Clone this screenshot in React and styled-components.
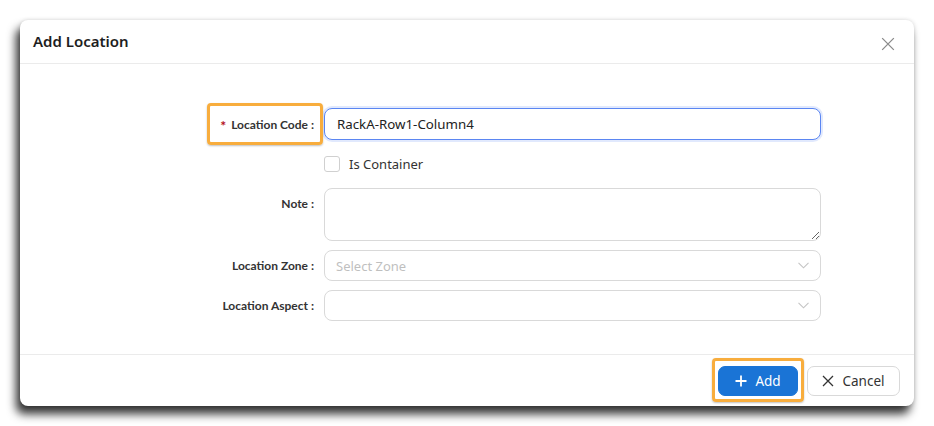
import React from 'react'
import styled, { createGlobalStyle } from 'styled-components'

const Global = createGlobalStyle`
  html, body {
    margin: 0;
    padding: 0;
    background: #ffffff;
    font-family: "Noto Sans", "Open Sans", sans-serif;
  }
`

const Page = styled.div`
  width: 934px;
  height: 426px;
  padding: 20px;
  box-sizing: border-box;
`

const Dialog = styled.div`
  width: 894px;
  height: 386px;
  background: #fff;
  border-radius: 8px;
  box-shadow: -4px 8px 10px rgba(0, 0, 0, 0.8), 0 0 4px rgba(0, 0, 0, 0.15);
  display: flex;
  flex-direction: column;
`

const Header = styled.div`
  height: 43px;
  border-bottom: 1px solid #ebebeb;
  display: flex;
  align-items: center;
  justify-content: space-between;
  padding: 0 18px 0 13px;
`

const Title = styled.h2`
  margin: -2px 0 0;
  font-size: 15px;
  font-weight: 600;
  color: #1e1e1e;
`

const Close = styled.button`
  border: none;
  background: none;
  padding: 0;
  margin-top: 4px;
  width: 16px;
  height: 16px;
  display: flex;
  align-items: center;
  justify-content: center;
`

const Body = styled.div`
  flex: 1;
  padding-top: 44px;
  display: grid;
  grid-template-columns: 294px 497px;
  column-gap: 10px;
  align-content: start;
`

const Label = styled.div`
  display: flex;
  align-items: center;
  justify-content: flex-end;
  height: ${p => p.$h || 32}px;
  align-self: start;
  box-sizing: border-box;
  font-family: Lato, sans-serif;
  font-weight: 700;
  font-size: 12px;
  color: #333;
  margin-top: ${p => p.$mt || 0}px;
`

const Marked = styled.span`
  position: relative;
  display: inline-flex;
  align-items: center;
  gap: 5px;

  &::after {
    content: '';
    position: absolute;
    left: -13px;
    right: -9px;
    top: -11px;
    bottom: -11px;
    border: 3px solid #f8ad3d;
    border-radius: 4px;
    box-shadow: 0 1px 2px rgba(0, 0, 0, 0.25);
  }
`

const Star = styled.span`
  color: #b3101d;
  font-size: 14px;
  margin-top: 3px;
`

const Field = styled.div`
  margin-top: ${p => p.$mt || 0}px;
`

const TextInput = styled.input`
  width: 100%;
  height: 32px;
  box-sizing: border-box;
  border-radius: 8px;
  border: 1px solid ${p => (p.$focus ? '#5b86f2' : '#d9d9d9')};
  box-shadow: ${p => (p.$focus ? '0 0 0 2px rgba(91, 134, 242, 0.18)' : 'none')};
  padding: 0 12px;
  font-family: "Noto Sans", sans-serif;
  font-size: 13.3px;
  color: #222;
  outline: none;
`

const Area = styled.textarea`
  display: block;
  width: 100%;
  height: 53px;
  box-sizing: border-box;
  border-radius: 8px;
  border: 1px solid #d9d9d9;
  outline: none;
  resize: vertical;
  font-family: "Noto Sans", sans-serif;
`

const CheckRow = styled.label`
  display: flex;
  align-items: center;
  gap: 9px;
  height: 48px;
  font-size: 13px;
  color: #333;
`

const Box = styled.span`
  width: 14px;
  height: 14px;
  border: 1px solid #d0d0d0;
  border-radius: 3px;
`

const Select = styled.div`
  height: 31px;
  box-sizing: border-box;
  border-radius: 8px;
  border: 1px solid #d9d9d9;
  display: flex;
  align-items: center;
  justify-content: space-between;
  padding: 0 11px 0 11px;
  font-size: 13px;
  color: #bfbfbf;
`

const Footer = styled.div`
  height: 51px;
  border-top: 1px solid #ebebeb;
  display: flex;
  align-items: center;
  justify-content: flex-end;
  gap: 9px;
  padding: 0 14px 0 0;
`

const Btn = styled.button`
  height: 30px;
  box-sizing: border-box;
  border-radius: 7px;
  display: inline-flex;
  align-items: center;
  justify-content: center;
  gap: 8px;
  font-family: "Noto Sans", sans-serif;
  font-size: 13.5px;
  width: ${p => p.$w}px;
  background: ${p => (p.$primary ? '#1a74d6' : '#fff')};
  color: ${p => (p.$primary ? '#fff' : '#333')};
  border: 1px solid ${p => (p.$primary ? '#1a74d6' : '#d9d9d9')};
`

const BtnMark = styled.span`
  position: relative;
  display: inline-flex;

  &::after {
    content: '';
    position: absolute;
    inset: -8px -6px -6px -6px;
    border: 3px solid #f8ad3d;
    border-radius: 4px;
    box-shadow: 0 1px 2px rgba(0, 0, 0, 0.25);
    pointer-events: none;
  }
`

const Chevron = () => (
  <svg width="11" height="7" viewBox="0 0 11 7" fill="none">
    <path d="M0.5 0.8 L5.5 5.8 L10.5 0.8" stroke="#c4c4c4" strokeWidth="1.1" />
  </svg>
)

const Cross = ({ size = 12, color = '#333', w = 1.3 }) => (
  <svg width={size} height={size} viewBox="0 0 12 12" fill="none">
    <path d="M1 1 L11 11 M11 1 L1 11" stroke={color} strokeWidth={w} />
  </svg>
)

const Plus = () => (
  <svg width="12" height="12" viewBox="0 0 12 12" fill="none">
    <path d="M6 0.5 V11.5 M0.5 6 H11.5" stroke="#fff" strokeWidth="1.8" />
  </svg>
)

export default function App() {
  return (
    <Page>
      <Global />
      <Dialog>
        <Header>
          <Title>Add Location</Title>
          <Close>
            <Cross size={14} color="#8a8a8a" w={1.1} />
          </Close>
        </Header>
        <Body>
          <Label>
            <Marked>
              <Star>*</Star>Location Code :
            </Marked>
          </Label>
          <Field>
            <TextInput $focus defaultValue="RackA-Row1-Column4" />
          </Field>

          <div />
          <Field>
            <CheckRow>
              <Box />
              Is Container
            </CheckRow>
          </Field>

          <Label $h={30}>Note :</Label>
          <Field>
            <Area />
          </Field>

          <Label $mt={9} $h={31}>Location Zone :</Label>
          <Field $mt={9}>
            <Select>
              Select Zone
              <Chevron />
            </Select>
          </Field>

          <Label $mt={9} $h={31}>Location Aspect :</Label>
          <Field $mt={9}>
            <Select>
              <span />
              <Chevron />
            </Select>
          </Field>
        </Body>
        <Footer>
          <BtnMark>
            <Btn $primary $w={80}>
              <Plus />
              Add
            </Btn>
          </BtnMark>
          <Btn $w={93}>
            <Cross size={12} color="#333" w={1.3} />
            Cancel
          </Btn>
        </Footer>
      </Dialog>
    </Page>
  )
}
